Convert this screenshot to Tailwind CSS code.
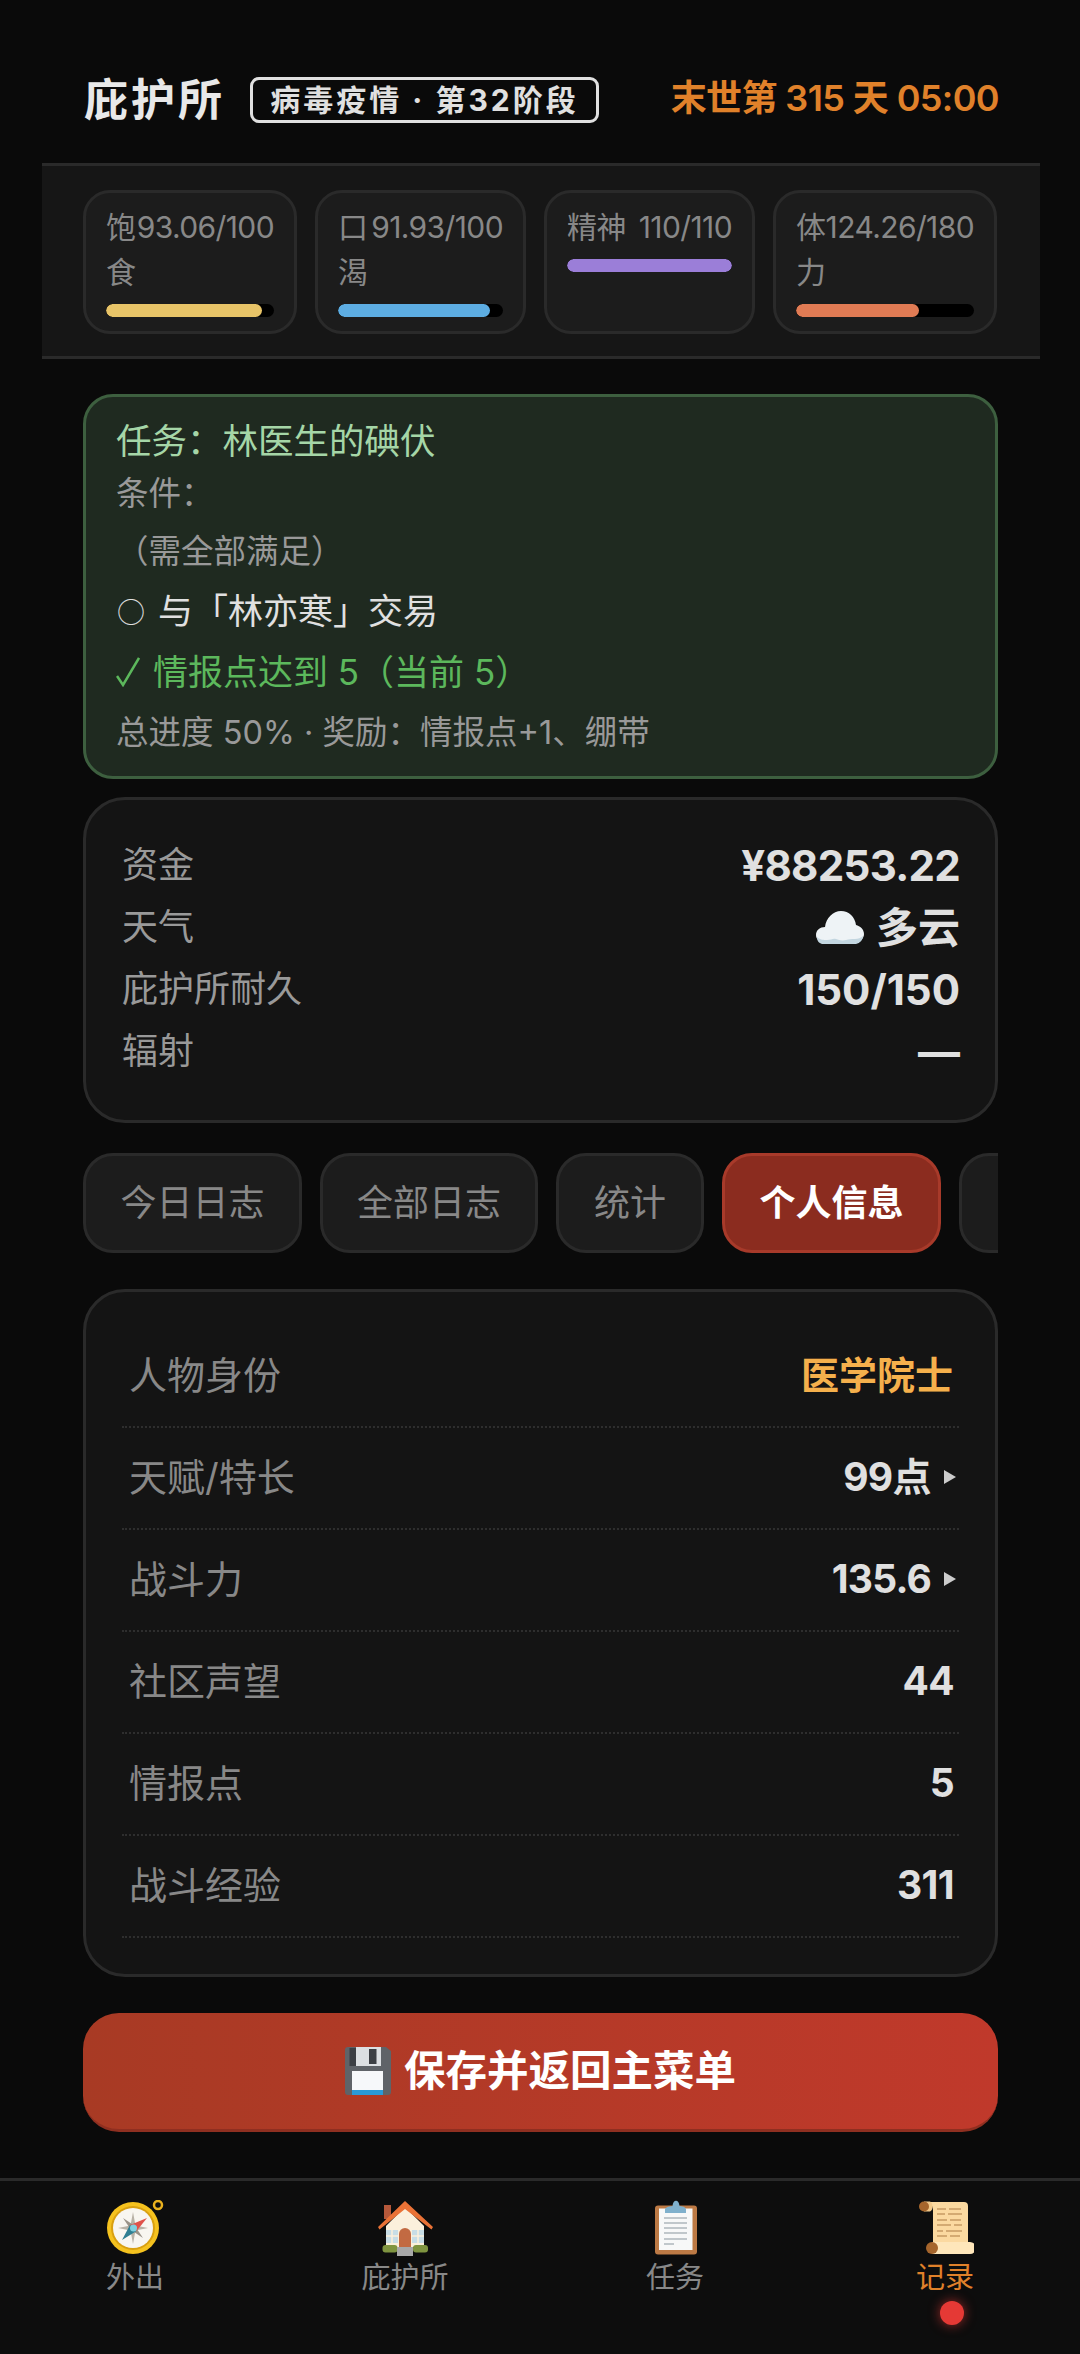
<!DOCTYPE html>
<html lang="zh">
<head>
<meta charset="UTF-8">
<title>庇护所</title>
<script src="https://cdn.jsdelivr.net/npm/@tailwindcss/browser@4"></script>
</head>
<body class="bg-[#0a0a0a] font-['Inter','Noto_Sans_CJK_SC',sans-serif] text-[#e0e0e0]">
<div class="w-[1080px] h-[2354px] flex flex-col overflow-hidden relative">

  <!-- top bar -->
  <header class="ml-[42px] mr-[40px] mt-[37px] h-[126px] pl-[42px] pr-[41px] flex items-center justify-between">
    <div class="flex items-center">
      <h1 class="text-[44px] leading-[56px] font-bold tracking-[3px] text-[#e8e8e8]">庇护所</h1>
      <span class="ml-[25px] h-[46px] w-[349px] flex items-center justify-center border-[3px] border-[#e0e0e0] rounded-[9px] text-[30px] font-bold tracking-[3px] whitespace-nowrap">病毒疫情 · 第32阶段</span>
    </div>
    <div class="mb-[4px] text-[36px] font-semibold tracking-[-0.600px] text-[#e0812a] whitespace-nowrap">末世第 315 天 05:00</div>
  </header>

  <!-- stats -->
  <section class="ml-[42px] mr-[40px] h-[196px] pl-[41px] pr-[41px] pt-[24px] bg-[#161616] border-y-[3px] border-[#2a2a2a] flex gap-[18px]">
    <div class="w-[214px] h-[144px] px-[20px] pt-[12px] bg-[#1c1c1c] border-[3px] border-[#2a2a2a] rounded-[27px]">
      <div class="flex justify-between text-[30px] leading-[45px] tracking-[-0.600px] text-[#888]"><span class="w-[30px]">饱食</span><span class="whitespace-nowrap">93.06/100</span></div>
      <div class="mt-[9px] h-[13px] rounded-full bg-black overflow-hidden"><div class="h-full rounded-full bg-[#e8c468]" style="width:93%"></div></div>
    </div>
    <div class="w-[211px] h-[144px] px-[20px] pt-[12px] bg-[#1c1c1c] border-[3px] border-[#2a2a2a] rounded-[27px]">
      <div class="flex justify-between text-[30px] leading-[45px] tracking-[-0.600px] text-[#888]"><span class="w-[30px]">口渴</span><span class="whitespace-nowrap">91.93/100</span></div>
      <div class="mt-[9px] h-[13px] rounded-full bg-black overflow-hidden"><div class="h-full rounded-full bg-[#5dade2]" style="width:92%"></div></div>
    </div>
    <div class="w-[211px] h-[144px] px-[20px] pt-[12px] bg-[#1c1c1c] border-[3px] border-[#2a2a2a] rounded-[27px]">
      <div class="flex justify-between text-[30px] leading-[45px] tracking-[-0.600px] text-[#888]"><span>精神</span><span class="whitespace-nowrap">110/110</span></div>
      <div class="mt-[9px] h-[13px] rounded-full bg-black overflow-hidden"><div class="h-full rounded-full bg-[#9b7ed8]" style="width:100%"></div></div>
    </div>
    <div class="w-[224px] h-[144px] px-[20px] pt-[12px] bg-[#1c1c1c] border-[3px] border-[#2a2a2a] rounded-[27px]">
      <div class="flex justify-between text-[30px] leading-[45px] tracking-[-0.600px] text-[#888]"><span class="w-[30px]">体力</span><span class="whitespace-nowrap">124.26/180</span></div>
      <div class="mt-[9px] h-[13px] rounded-full bg-black overflow-hidden"><div class="h-full rounded-full bg-[#e07b54]" style="width:69%"></div></div>
    </div>
  </section>

  <main class="pl-[83px] pr-[82px] pt-[35px] flex flex-col">
    <!-- task -->
    <section class="h-[385px] px-[30px] pt-[18px] bg-[#1f2a20] border-[3px] border-[#3d5f3f] rounded-[30px]">
      <div class="text-[35.500px] leading-[54px] text-[#a5d6a7]">任务：林医生的碘伏</div>
      <div class="text-[32.500px] leading-[50px] text-[#999]">条件：</div>
      <div class="mt-[4px] text-[32.500px] leading-[58px] text-[#999]">（需全部满足）</div>
      <div class="mt-[-1px] h-[62px] flex items-center text-[35px] text-[#e0e0e0]"><span class="ml-[1px] mr-[13px] font-['Noto_Sans_CJK_SC'] font-light text-[28px]">○</span>与「林亦寒」交易</div>
      <div class="h-[60px] flex items-center gap-[13px] text-[35px] text-[#5cb85c]">
        <svg class="w-[24px] h-[30px]" viewBox="0 0 24 30" fill="none" stroke="#5cb85c" stroke-width="2.500"><path d="M1 19 7 28 23 1"/></svg>
        <span>情报点达到 5（当前 5）</span>
      </div>
      <div class="text-[32.500px] leading-[62px] text-[#999]">总进度 50% · 奖励：情报点+1、绷带</div>
    </section>

    <!-- resources -->
    <section class="mt-[18px] h-[326px] pl-[36px] pr-[35px] pt-[34px] bg-[#141414] border-[3px] border-[#2a2a2a] rounded-[42px]">
      <div class="h-[62px] flex items-center justify-between"><span class="text-[36px] text-[#999]">资金</span><span class="text-[42px] font-bold tracking-[-0.700px]">¥88253.22</span></div>
      <div class="h-[62px] flex items-center justify-between"><span class="text-[36px] text-[#999]">天气</span>
        <span class="flex items-center gap-[12px] text-[42px] font-bold">
          <svg class="w-[48px] h-[36px]" viewBox="0 0 48 34"><path d="M6 32c-3-1-6-3-6-7 0-5 4-8 9-8 1-9 8-16 16-16s14 6 15 14c4 1 8 4 8 9 0 4-3 7-7 8z" fill="#eef3f6"/><path d="M1 27c3 3 7 3 10 3 4 0 6-2 9-1 3 1 6 2 10 1 3-1 5-1 9-1 3 0 6-1 8-3 0 4-3 7-7 8H6c-3-1-5-3-5-7z" fill="#c3d6e0"/></svg>
          多云</span></div>
      <div class="h-[62px] flex items-center justify-between"><span class="text-[36px] text-[#999]">庇护所耐久</span><span class="text-[42px] font-bold">150/150</span></div>
      <div class="h-[62px] flex items-center justify-between"><span class="text-[36px] text-[#999]">辐射</span><span class="text-[42px] font-bold">—</span></div>
    </section>

    <!-- tabs -->
    <nav class="mt-[30px] h-[100px] flex gap-[18px] overflow-hidden">
      <div class="shrink-0 w-[219px] flex items-center justify-center bg-[#1c1c1c] border-[3px] border-[#2a2a2a] rounded-[30px] text-[36px] text-[#888]">今日日志</div>
      <div class="shrink-0 w-[218px] flex items-center justify-center bg-[#1c1c1c] border-[3px] border-[#2a2a2a] rounded-[30px] text-[36px] text-[#888]">全部日志</div>
      <div class="shrink-0 w-[148px] flex items-center justify-center bg-[#1c1c1c] border-[3px] border-[#2a2a2a] rounded-[30px] text-[36px] text-[#888]">统计</div>
      <div class="shrink-0 w-[219px] flex items-center justify-center bg-[#8b2c1f] border-[3px] border-[#a83a2a] rounded-[30px] text-[36px] font-bold text-white">个人信息</div>
      <div class="shrink-0 w-[147px] bg-[#1c1c1c] border-[3px] border-[#2a2a2a] rounded-[30px]"></div>
    </nav>

    <!-- profile -->
    <section class="mt-[36px] h-[688px] px-[36px] pt-[34px] bg-[#141414] border-[3px] border-[#2a2a2a] rounded-[42px]">
      <div class="h-[102px] pl-[7px] pr-[6px] pb-[2px] flex items-center justify-between border-b-[2px] border-dotted border-[#2e2e2e]"><span class="text-[38px] text-[#888]">人物身份</span><span class="text-[38px] font-bold text-[#f5b04c]">医学院士</span></div>
      <div class="h-[102px] pl-[7px] pr-[3px] pb-[2px] flex items-center justify-between border-b-[2px] border-dotted border-[#2e2e2e]"><span class="text-[38px] text-[#888]">天赋/特长</span><span class="flex items-center gap-[13px] text-[39px] font-bold tracking-[-0.600px]">99点<i class="w-0 h-0 border-y-[7px] border-y-transparent border-l-[12px] border-l-[#ccc]"></i></span></div>
      <div class="h-[102px] pl-[7px] pr-[3px] pb-[2px] flex items-center justify-between border-b-[2px] border-dotted border-[#2e2e2e]"><span class="text-[38px] text-[#888]">战斗力</span><span class="flex items-center gap-[13px] text-[39px] font-bold tracking-[-0.800px]">135.6<i class="w-0 h-0 border-y-[7px] border-y-transparent border-l-[12px] border-l-[#ccc]"></i></span></div>
      <div class="h-[102px] pl-[7px] pr-[5px] pb-[2px] flex items-center justify-between border-b-[2px] border-dotted border-[#2e2e2e]"><span class="text-[38px] text-[#888]">社区声望</span><span class="text-[39px] font-bold tracking-[-0.600px]">44</span></div>
      <div class="h-[102px] pl-[7px] pr-[5px] pb-[2px] flex items-center justify-between border-b-[2px] border-dotted border-[#2e2e2e]"><span class="text-[38px] text-[#888]">情报点</span><span class="text-[39px] font-bold tracking-[-0.600px]">5</span></div>
      <div class="h-[102px] pl-[7px] pr-[5px] pb-[2px] flex items-center justify-between border-b-[2px] border-dotted border-[#2e2e2e]"><span class="text-[38px] text-[#888]">战斗经验</span><span class="text-[39px] font-bold tracking-[-0.600px]">311</span></div>
    </section>

    <!-- save -->
    <button class="mt-[36px] h-[119px] flex items-center justify-center gap-[13px] rounded-[36px] border-b-[3px] border-[#8f2f20] bg-gradient-to-r from-[#a83a24] to-[#c0392b] text-[41.500px] font-bold text-white">
      <svg class="w-[46px] h-[48px]" viewBox="0 0 46 48"><path d="M0 3a3 3 0 0 1 3-3h38l5 4v41a3 3 0 0 1-3 3H3a3 3 0 0 1-3-3z" fill="#5f6368"/><rect x="4.500" y="1" width="7" height="18" fill="#3c3f44"/><rect x="11" y="0" width="25" height="19" fill="#dcdfe2"/><rect x="24" y="2" width="7.500" height="15" fill="#3c3f44"/><rect x="7" y="24" width="31" height="24" fill="#f6f8fa"/><rect x="7" y="43" width="31" height="5" fill="#2a9ad8"/></svg>
      保存并返回主菜单
    </button>
  </main>

  <!-- bottom nav -->
  <footer class="absolute left-0 right-0 bottom-0 h-[176px] pt-[19px] bg-[#0d0d0d] border-t-[3px] border-[#2a2a2a] grid grid-cols-4">
    <div class="flex flex-col items-center text-[#888]">
      <svg class="w-[58px] h-[58px]" viewBox="0 0 58 58">
        <circle cx="52" cy="5" r="4" fill="none" stroke="#eab11e" stroke-width="2.500"/>
        <circle cx="27" cy="28" r="26" fill="#f5c21e"/><circle cx="27" cy="28" r="22" fill="#d9a010"/><circle cx="27" cy="28" r="20" fill="#f8f6f0"/>
        <path d="M27 12 29.500 25.500 42 28 29.500 30.500 27 44 24.500 30.500 12 28 24.500 25.500z" fill="#b8b2a6"/>
        <path d="M17 18 29 26 37 38 25 30z" fill="#9a9388"/>
        <path d="M41 18 30.500 31 24 25z" fill="#e0524a"/><path d="M16 40 24 25 30.500 31z" fill="#2f7f92"/>
        <circle cx="27.500" cy="28" r="3.500" fill="#7fd0e0"/>
      </svg>
      <span class="text-[29px] leading-[40px]">外出</span>
    </div>
    <div class="flex flex-col items-center text-[#888]">
      <svg class="w-[58px] h-[58px]" viewBox="0 0 58 58">
        <rect x="8" y="5" width="7" height="14" fill="#b5583a"/>
        <path d="M10 26 29 7 48 26v21H10z" fill="#fbf0dc"/>
        <path d="M2 27 29 1 57 27l-1.500 2.500L29 9 3.500 29.500z" fill="#ea7236"/>
        <rect x="10" y="30" width="12" height="13" fill="#c7dde6"/><path d="M16 30v13M10 36h12" stroke="#fbf0dc" stroke-width="1.500"/>
        <rect x="36" y="30" width="12" height="13" fill="#c7dde6"/><path d="M42 30v13M36 36h12" stroke="#fbf0dc" stroke-width="1.500"/>
        <path d="M23 47V34a6 6 0 0 1 12 0v13z" fill="#c26a42"/>
        <rect x="6.500" y="45" width="15" height="7.500" rx="3" fill="#7f9440"/><rect x="37" y="45" width="15" height="7.500" rx="3" fill="#7f9440"/>
        <rect x="21" y="47" width="16" height="9" fill="#a8a8a8"/>
      </svg>
      <span class="text-[29px] leading-[40px]">庇护所</span>
    </div>
    <div class="flex flex-col items-center text-[#888]">
      <svg class="w-[58px] h-[58px]" viewBox="0 0 58 58">
        <rect x="9" y="5.500" width="42" height="49" rx="3" fill="#bd7a45"/>
        <rect x="13" y="8.500" width="33.500" height="41.500" fill="#f7f8f8"/>
        <path d="M19 13V9.500c0-2 3-3 7.500-3.500.5-7 6.500-7 7 0 4.500.5 6.500 1.500 6.500 3.500V13z" fill="#7fb0cc"/>
        <path d="M18 18h23M18 23h23M18 28h23M18 33h23M18 39h23M18 44h10" stroke="#aeb6bc" stroke-width="1.600"/>
      </svg>
      <span class="text-[29px] leading-[40px]">任务</span>
    </div>
    <div class="flex flex-col items-center text-[#e0812a]">
      <svg class="w-[58px] h-[58px]" viewBox="0 0 58 58">
        <path d="M13 2h35a4 4 0 0 1 4 4v40H17V11c0-3-1-7-4-9z" fill="#fbd9a0"/>
        <path d="M8 1.500h6c3 1 3.500 9 0 10H8z" fill="#f2c98a"/>
        <circle cx="8" cy="6.500" r="5" fill="#a5652c"/>
        <path d="M21 9h9M33 9h12M21 14h8M32 14h14M21 20h10M34 20h11M21 25h14M38 25h8M21 31h6M30 31h16M21 36h10M34 36h10" stroke="#c89b63" stroke-width="1.600"/>
        <path d="M16 42h38a6 6 0 0 1 0 12H16z" fill="#fee6ba"/>
        <circle cx="16" cy="48" r="6" fill="#a5652c"/>
      </svg>
      <span class="text-[29px] leading-[40px]">记录</span>
    </div>
    <span class="absolute left-[940px] top-[120px] w-[24px] h-[24px] rounded-full bg-[#e53935] shadow-[0_0_12px_#e53935aa]"></span>
  </footer>
</div>
</body>
</html>
